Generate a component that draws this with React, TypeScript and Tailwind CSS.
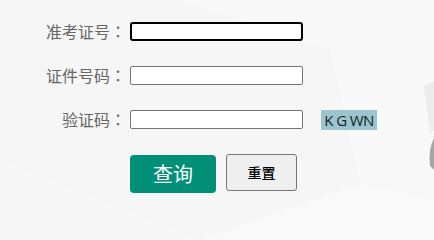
import React from "react";

const labelCls =
  "w-[126px] text-right text-[16px] leading-[19px] text-[#666] shrink-0";
const font = { fontFamily: '"Noto Sans CJK SC", "Noto Sans", sans-serif' };
const colonFont = { fontFamily: '"Noto Sans CJK JP", "Noto Sans", sans-serif' };

function Label({ text }: { text: string }) {
  return (
    <div className={labelCls}>
      {text}
      <span style={colonFont}>：</span>
    </div>
  );
}

export default function App() {
  return (
    <div
      className="relative w-[434px] h-[240px] overflow-hidden bg-[#f6f6f6]"
      style={font}
    >
      <svg
        className="absolute inset-0"
        width="434"
        height="240"
        viewBox="0 0 434 240"
      >
        <polygon points="180,0 434,0 434,40 330,50" fill="#f8f8f8" />
        <polygon points="330,50 434,40 434,200 360,183" fill="#f8f8f8" />
        <polygon points="0,160 200,240 0,240" fill="#f7f7f7" />
        <polygon points="200,240 360,183 434,200 434,240" fill="#f9f9f9" />
        <path d="M424 86 L434 82 L434 130 L430 134 Z" fill="#ececec" />
        <path d="M434 138 Q428 150 430 166 L434 170 Z" fill="#a5a5a5" />
      </svg>

      <div className="relative flex flex-col pt-[22px] gap-[25px]">
        <div className="flex items-center h-[19px]">
          <Label text="准考证号" />
          <input
            className="ml-[4px] w-[173px] h-[19px] bg-white border-2 border-black rounded-[3px] outline-none"
            type="text"
          />
        </div>
        <div className="flex items-center h-[19px]">
          <Label text="证件号码" />
          <input
            className="ml-[4px] w-[173px] h-[19px] bg-white border border-[#767676] rounded-[2px] outline-none"
            type="text"
          />
        </div>
        <div className="flex items-center h-[19px]">
          <Label text="验证码" />
          <input
            className="ml-[4px] w-[173px] h-[19px] bg-white border border-[#767676] rounded-[2px] outline-none"
            type="text"
          />
          <div
            className="ml-[18px] w-[56px] h-[20px] bg-[#9cc4cf] text-[#14252b] text-[15px] leading-[20px] text-center tracking-[-0.6px] font-medium"
            style={{ fontFamily: '"Open Sans", "Noto Sans", sans-serif' }}
          >
            K G WN
          </div>
        </div>
        <div className="flex items-start pl-[130px] gap-[10px]">
          <button className="mt-px w-[86px] h-[38px] rounded-[4px] bg-[#019077] text-white text-[20px] leading-[38px]">
            查询
          </button>
          <button className="w-[71px] h-[37px] rounded-[3px] bg-[#efefef] border border-[#767676] text-black text-[14px] font-medium">
            重置
          </button>
        </div>
      </div>
    </div>
  );
}
